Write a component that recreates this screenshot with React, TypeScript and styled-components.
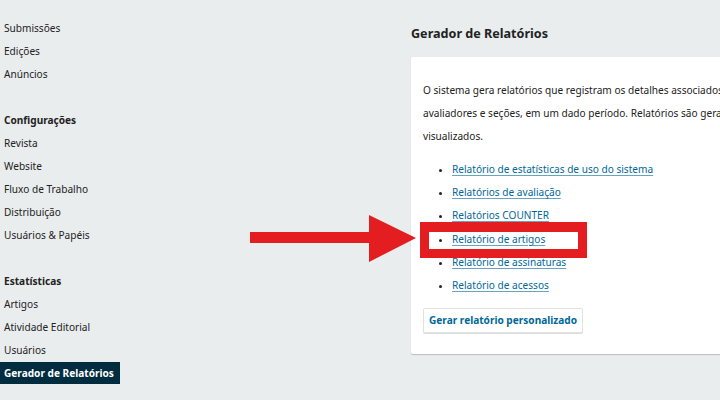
import React from "react";
import styled, { createGlobalStyle } from "styled-components";

const Global = createGlobalStyle`
  html, body { margin: 0; padding: 0; }
  body {
    background: #eaedee;
    font-family: "Noto Sans", "Open Sans", sans-serif;
    color: #222;
    overflow: hidden;
    width: 720px;
    height: 400px;
  }
`;

const Page = styled.div`
  position: relative;
  display: grid;
  grid-template-columns: 411px 1fr;
  width: 720px;
  height: 400px;
  overflow: hidden;
`;

const Sidebar = styled.nav`
  padding-top: 17px;
  display: flex;
  flex-direction: column;
  gap: 23px;
`;

const Group = styled.ul`
  list-style: none;
  margin: 0;
  padding: 0;
`;

const NavItem = styled.li<{ $heading?: boolean; $active?: boolean }>`
  font-size: 10.1px;
  line-height: 23px;
  height: 23px;
  padding-left: 4px;
  font-weight: ${(p) => (p.$heading ? 700 : 400)};
  color: #222;
  ${(p) =>
    p.$active &&
    `
    width: fit-content;
    height: 22px;
    line-height: 22px;
    padding: 0 6px 0 4px;
    background: #002c40;
    color: #fff;
    font-weight: 700;
  `}
`;

const Main = styled.main`
  padding-top: 22px;
  min-width: 0;
`;

const Title = styled.h1`
  margin: 0 0 12px 0;
  font-size: 12.6px;
  line-height: 23px;
  font-weight: 700;
  color: #222;
`;

const Panel = styled.section`
  width: 560px;
  background: #fff;
  border-radius: 2px;
  box-shadow: 0 1px 1px rgba(0, 0, 0, 0.2);
  padding: 22px 12px 21px 12px;
`;

const Text = styled.p`
  margin: 0;
  font-size: 10.1px;
  line-height: 23px;
  white-space: nowrap;
`;

const Reports = styled.ul`
  margin: 10px 0 10px 0;
  padding-left: 29px;
  list-style: disc;
`;

const ReportItem = styled.li`
  font-size: 10.1px;
  line-height: 23.2px;
  &::marker {
    font-size: 9px;
  }
`;

const ReportLink = styled.a`
  color: #006798;
  text-decoration: underline;
  text-decoration-color: rgba(0, 103, 152, 0.6);
  text-underline-offset: 2px;
`;

const Button = styled.button`
  height: 25px;
  padding: 0 5px;
  background: #fff;
  border: 1px solid #e2e2e2;
  border-radius: 2px;
  box-shadow: 0 1px 0 #ddd;
  font-family: inherit;
  font-size: 10.1px;
  font-weight: 700;
  color: #006798;
`;

const Highlight = styled.div`
  position: absolute;
  left: 420px;
  top: 222px;
  width: 167px;
  height: 36px;
  box-sizing: border-box;
  border: 9px solid #e41e20;
  border-top-width: 10px;
  pointer-events: none;
`;

const Arrow = styled.svg`
  position: absolute;
  left: 248px;
  top: 213px;
  pointer-events: none;
`;

const groups = [
  [
    { label: "Submissões" },
    { label: "Edições" },
    { label: "Anúncios" },
  ],
  [
    { label: "Configurações", heading: true },
    { label: "Revista" },
    { label: "Website" },
    { label: "Fluxo de Trabalho" },
    { label: "Distribuição" },
    { label: "Usuários & Papéis" },
  ],
  [
    { label: "Estatísticas", heading: true },
    { label: "Artigos" },
    { label: "Atividade Editorial" },
    { label: "Usuários" },
    { label: "Gerador de Relatórios", active: true },
  ],
];

const reports = [
  "Relatório de estatísticas de uso do sistema",
  "Relatórios de avaliação",
  "Relatórios COUNTER",
  "Relatório de artigos",
  "Relatório de assinaturas",
  "Relatório de acessos",
];

export default function App() {
  return (
    <>
      <Global />
      <Page>
        <Sidebar>
          {groups.map((g, i) => (
            <Group key={i}>
              {g.map((it) => (
                <NavItem key={it.label} $heading={(it as any).heading} $active={(it as any).active}>
                  {it.label}
                </NavItem>
              ))}
            </Group>
          ))}
        </Sidebar>
        <Main>
          <Title>Gerador de Relatórios</Title>
          <Panel>
            <Text>
              O sistema gera relatórios que registram os detalhes associados ao uso do site, submissões, artigos,
              <br />
              avaliadores e seções, em um dado período. Relatórios são gerados no formato CSV, que requer um
              <br />
              visualizados.
            </Text>
            <Reports>
              {reports.map((r) => (
                <ReportItem key={r}>
                  <ReportLink href="#">{r}</ReportLink>
                </ReportItem>
              ))}
            </Reports>
            <Button>Gerar relatório personalizado</Button>
          </Panel>
        </Main>
        <Highlight />
        <Arrow width="170" height="52" viewBox="0 0 170 52">
          <rect x="2" y="19" width="124" height="11" fill="#e41e20" />
          <polygon points="121,2 168,25 121,49" fill="#e41e20" />
        </Arrow>
      </Page>
    </>
  );
}
